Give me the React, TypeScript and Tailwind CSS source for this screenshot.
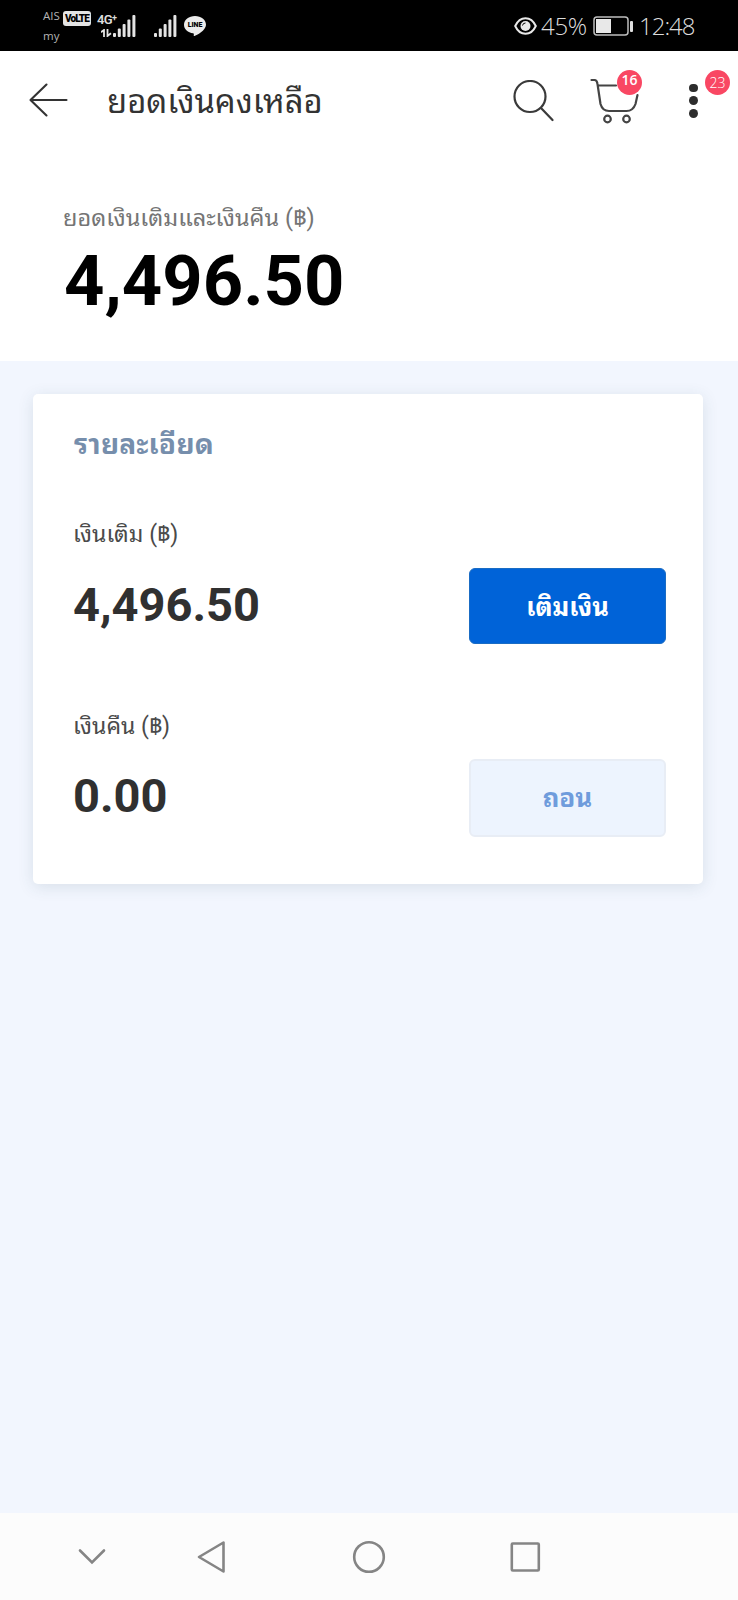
import React from "react";

interface AmountRow {
  label: string;
  amount: string;
  action: string;
  disabled?: boolean;
}

const rows: AmountRow[] = [
  { label: "เงินเติม (฿)", amount: "4,496.50", action: "เติมเงิน" },
  { label: "เงินคืน (฿)", amount: "0.00", action: "ถอน", disabled: true },
];

const Signal = () => (
  <svg width="23" height="22" viewBox="0 0 23 22" fill="#e4e4e4">
    <rect x="0" y="18" width="3" height="4" rx="1" />
    <rect x="4.8" y="13.5" width="3" height="8.5" rx="1" />
    <rect x="9.6" y="9" width="3" height="13" rx="1" />
    <rect x="14.4" y="4.5" width="3" height="17.5" rx="1" />
    <rect x="19.4" y="0" width="3" height="22" rx="1" />
  </svg>
);

const StatusBar = () => (
  <div className="flex h-[51px] justify-between bg-black pl-[43px] pr-[43px] font-['Open_Sans',sans-serif] text-[#dcdcdc]">
    <div className="flex">
      <div className="w-5 pt-[6px] text-[11.5px] leading-[20px] text-[#b4b4b4]">
        <p>AIS</p>
        <p>my</p>
      </div>
      <span className="mt-[11px] flex h-[15px] w-7 items-center justify-center rounded-[3px] bg-[#e4e4e4] font-['Roboto',sans-serif] text-[10px] font-black tracking-[-0.9px] text-black">
        VoLTE
      </span>
      <div className="ml-[6px] w-4 pt-[13px]">
        <p className="whitespace-nowrap font-['Roboto',sans-serif] text-[13px] font-semibold leading-[13px] tracking-[-0.6px]">
          4G<sup className="-top-[3px] text-[9px]">+</sup>
        </p>
        <svg className="ml-[4px] mt-[3px]" width="11" height="8" viewBox="0 0 11 8" fill="none" stroke="#e4e4e4" strokeWidth="1.8">
          <path d="M0 3.2L3 1V8M6.5 0V7L10 4.2" />
        </svg>
      </div>
      <div className="pt-[15px]">
        <Signal />
      </div>
      <div className="ml-[18px] pt-[15px]">
        <Signal />
      </div>
      <div className="relative ml-[7px] mt-[16px] h-[21px] w-[22px]">
        <svg width="22" height="21" viewBox="0 0 22 21" fill="#ececec">
          <path d="M11 0C4.900 0 0 3.900 0 8.700c0 4.500 4 7.900 9.100 8.600.8.200.8.700.7 1.500-.1 1-.1 1.500.7 1.200C12.500 19.200 22 14.500 22 8.700 22 3.900 17.100 0 11 0z" />
        </svg>
        <span className="absolute inset-x-0 top-[5px] text-center font-['Roboto',sans-serif] text-[7px] font-black leading-[8px] text-black">
          LINE
        </span>
      </div>
    </div>
    <div className="flex items-center text-[24px] font-light">
      <svg width="23" height="18" viewBox="0 0 23 18" fill="none" stroke="#e8e8e8" strokeWidth="2">
        <path d="M1.200 9C6-1.400 17-1.400 21.800 9C17 19.400 6 19.400 1.200 9z" />
        <circle cx="11.500" cy="9" r="5" fill="#e8e8e8" stroke="none" />
        <path d="M8.500 8.500a3 3 0 0 1 3-2.500" stroke="#000" strokeWidth="1" />
      </svg>
      <span className="ml-[4px] w-[52px] tracking-[-0.3px]">45%</span>
      <svg width="41" height="20" viewBox="0 0 41 20" fill="none">
        <rect x="1" y="1" width="34" height="18" rx="3" stroke="#bdbdbd" strokeWidth="1.500" />
        <rect x="3" y="3" width="15" height="14" fill="#e8e8e8" />
        <rect x="37" y="5" width="3" height="11" rx="1" fill="#e0e0e0" />
      </svg>
      <span className="ml-[5px] w-[56px] tracking-[-1px]">12:48</span>
    </div>
  </div>
);

const Header = () => (
  <header className="flex h-[99px] items-center pl-[29px]">
    <svg className="mb-[2px]" width="40" height="36" viewBox="0 0 40 36" fill="none" stroke="#333" strokeWidth="2.100" strokeLinecap="round" strokeLinejoin="round">
      <path d="M37.500 18H2M17.500 2.500L1.500 18L17.500 33.500" />
    </svg>
    <h1 className="ml-[38px] mt-[3px] flex-1 whitespace-nowrap text-[32.8px] leading-[40px] text-[#333]">
      ยอดเงินคงเหลือ
    </h1>
    <svg width="42" height="42" viewBox="0 0 42 42" fill="none" stroke="#3a3a3a" strokeWidth="2.200" strokeLinecap="round">
      <circle cx="18" cy="16.500" r="15.500" />
      <path d="M29 28L40.500 40" />
    </svg>
    <div className="relative ml-[36px] h-[46px] w-[50px]">
      <svg width="50" height="46" viewBox="0 0 50 46" fill="none" stroke="#444" strokeWidth="2.200" strokeLinecap="round">
        <path d="M1.500 2H4.500Q7 2 7.500 6L10.500 26Q12.500 33 19 33H36.500Q43 33 45.500 26L47.500 17M8 7.500H26" />
        <circle cx="17.500" cy="41" r="3.300" />
        <circle cx="36.500" cy="41" r="3.300" />
      </svg>
      <span className="absolute left-[27px] top-[-8px] flex h-[25px] w-[25px] items-center justify-center rounded-full bg-[#f94763] pb-[6px] font-['Open_Sans',sans-serif] text-[14px] font-semibold text-white">
        16
      </span>
    </div>
    <div className="relative ml-[49px] flex h-[34px] w-[49px] flex-col justify-between">
      <i className="block h-[8.5px] w-[8.5px] rounded-full bg-[#2d2d2d]" />
      <i className="block h-[8.5px] w-[8.5px] rounded-full bg-[#2d2d2d]" />
      <i className="block h-[8.5px] w-[8.5px] rounded-full bg-[#2d2d2d]" />
      <span className="absolute left-[16px] top-[-14px] flex h-[25px] w-[25px] items-center justify-center rounded-full bg-[#f94763] font-['Open_Sans',sans-serif] text-[14px] font-light text-white">
        23
      </span>
    </div>
  </header>
);

const Row: React.FC<AmountRow> = ({ label, amount, action, disabled }) => (
  <div className="h-[191px]">
    <p
      className={
        disabled
          ? "pt-[3px] text-[23px] leading-[32px] text-[#4a4a4a]"
          : "pt-[2px] text-[23px] leading-[32px] text-[#4a4a4a]"
      }
    >
      {label}
    </p>
    <div className={disabled ? "mt-[15px] flex h-[78px] items-center justify-between" : "mt-[17px] flex h-[76px] items-center justify-between"}>
      <span className="mb-[2px] font-['Roboto',sans-serif] text-[47px] font-bold leading-[56px] text-[#303030]">
        {amount}
      </span>
      <button
        disabled={disabled}
        className={
          disabled
            ? "mt-[2px] h-[78px] w-[197px] rounded-[6px] border-2 border-[#e8edf5] bg-[#edf4fe] text-[26px] font-bold text-[#6f9cdc]"
            : "h-[76px] w-[197px] rounded-[6px] border border-[#1a6cc4] bg-[#0063d8] pt-[2px] text-[25.5px] font-bold text-white"
        }
      >
        {action}
      </button>
    </div>
  </div>
);

const NavBar = () => (
  <nav className="flex h-[87px] items-center bg-[#fcfcfc] pl-[78px] text-[#858585]">
    <svg width="28" height="34" viewBox="0 0 28 34" fill="none" stroke="currentColor" strokeWidth="2.600" strokeLinecap="round">
      <path d="M2 10.500L14 22.500L26 10.500" />
    </svg>
    <svg className="ml-[91px]" width="29" height="34" viewBox="0 0 29 34" fill="none" stroke="currentColor" strokeWidth="2.600" strokeLinejoin="round">
      <path d="M26.500 2.500V31.500L2 17z" />
    </svg>
    <svg className="ml-[126px]" width="34" height="34" viewBox="0 0 34 34" fill="none" stroke="currentColor" strokeWidth="2.600">
      <circle cx="17" cy="17" r="14.800" />
    </svg>
    <svg className="ml-[123px]" width="32" height="34" viewBox="0 0 32 34" fill="none" stroke="currentColor" strokeWidth="2.600">
      <rect x="2.800" y="3.500" width="27" height="27" rx="1" />
    </svg>
  </nav>
);

export default function App() {
  return (
    <div className="flex h-[1600px] w-[738px] flex-col overflow-hidden bg-[#f2f6fe] font-['Roboto','Noto_Sans_Thai_Looped','Noto_Looped_Thai','Loma','Waree','Noto_Sans_Thai',sans-serif]">
      <StatusBar />
      <div className="h-[310px] bg-white">
        <Header />
        <div className="pl-[63px] pt-[51px]">
          <p className="text-[23.5px] leading-[34px] text-[#757575]">
            ยอดเงินเติมและเงินคืน (฿)
          </p>
          <p className="ml-px mt-[8px] font-['Roboto',sans-serif] text-[70.5px] font-bold leading-[76px] text-black">
            4,496.50
          </p>
        </div>
      </div>
      <main className="flex-1 px-[33px] pt-[33px]">
        <section className="h-[490px] w-[670px] rounded-[5px] bg-white pl-[40px] pr-[37px] pt-[34px] shadow-[0_3px_16px_rgba(50,80,90,0.13)]">
          <h2 className="mb-[55px] ml-px text-[28px] font-bold leading-[34px] tracking-[0.3px] text-[#768eac]">
            รายละเอียด
          </h2>
          {rows.map((row) => (
            <Row key={row.action} {...row} />
          ))}
        </section>
      </main>
      <NavBar />
    </div>
  );
}
